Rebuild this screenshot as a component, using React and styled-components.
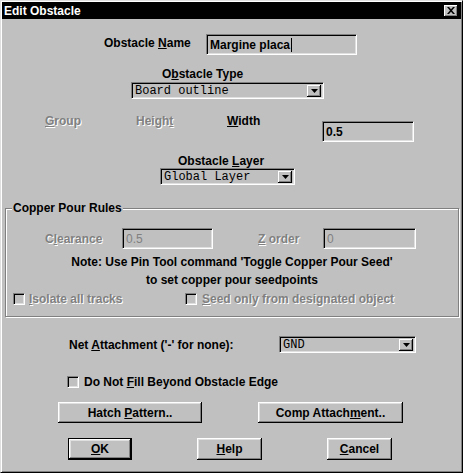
import React from "react";
import styled, { createGlobalStyle, css } from "styled-components";

const GlobalStyle = createGlobalStyle`
  html, body {
    margin: 0;
    padding: 0;
    background: #c0c0c0;
  }
  body {
    font-family: "Liberation Sans", Arial, sans-serif;
    font-size: 12px;
    font-weight: bold;
    color: #000;
  }
  * { box-sizing: border-box; }
`;

const Window = styled.div`
  width: 463px;
  height: 473px;
  background: #c0c0c0;
  border: 1px solid;
  border-color: #dfdfdf #000 #000 #dfdfdf;
  box-shadow: inset 1px 1px #fff, inset -1px -1px #808080;
  padding: 1px;
  display: flex;
  flex-direction: column;
`;

const TitleBar = styled.div`
  height: 17px;
  background: #000;
  color: #fff;
  display: flex;
  align-items: center;
  justify-content: space-between;
  padding: 0 3px 0 2px;
  flex-shrink: 0;
`;

const CloseButton = styled.div`
  width: 14px;
  height: 12px;
  background: #c0c0c0;
  box-shadow: inset -1px -1px #000, inset 1px 1px #fff, inset -2px -2px #808080;
  display: flex;
  align-items: center;
  justify-content: center;
  padding-bottom: 1px;
`;

const Body = styled.div`
  display: flex;
  flex-direction: column;
`;

const Row = styled.div`
  display: flex;
  align-items: center;
  margin-top: ${(p) => p.$mt || 0}px;
  height: ${(p) => p.$h}px;
  padding-left: ${(p) => p.$pl || 0}px;
  gap: ${(p) => p.$gap || 0}px;
  flex-shrink: 0;
`;

const GridRow = styled.div`
  display: grid;
  grid-template-columns: ${(p) => p.$cols};
  align-items: center;
  margin-top: ${(p) => p.$mt || 0}px;
  height: ${(p) => p.$h}px;
  padding-left: ${(p) => p.$pl || 0}px;
  flex-shrink: 0;
`;

const Label = styled.div`
  line-height: 14px;
  white-space: nowrap;
  width: ${(p) => (p.$w ? `${p.$w}px` : "auto")};
  align-self: ${(p) => p.$align || "auto"};
  padding-bottom: ${(p) => p.$raise || 0}px;
  ${(p) =>
    p.$disabled &&
    css`
      color: #808080;
      text-shadow: 1px 1px 0 #fff;
    `}
`;

const U = styled.span`
  text-decoration: underline;
  text-underline-offset: 1px;
`;

const Field = styled.div`
  width: ${(p) => p.$w}px;
  height: ${(p) => p.$h || 21}px;
  align-self: ${(p) => p.$align || "auto"};
  background: #c0c0c0;
  border: 1px solid;
  border-color: #808080 #fff #fff #808080;
  box-shadow: inset 1px 1px #000, inset -1px -1px #dfdfdf;
  display: flex;
  align-items: center;
  padding-left: 3px;
  color: ${(p) => (p.$disabled ? "#808080" : "#000")};
  font-weight: ${(p) => (p.$disabled ? "normal" : "bold")};
  white-space: nowrap;
  overflow: hidden;
`;

const Caret = styled.span`
  display: inline-block;
  width: 1px;
  height: 14px;
  background: #000;
  margin-left: 1px;
`;

const SelectBox = styled.div`
  width: ${(p) => p.$w}px;
  height: ${(p) => p.$h || 17}px;
  background: #c0c0c0;
  border: 1px solid;
  border-color: #808080 #fff #fff #808080;
  box-shadow: inset 1px 1px #000, inset -1px -1px #dfdfdf;
  display: flex;
  align-items: center;
  justify-content: space-between;
  padding: 0 2px 0 3px;
`;

const SelectText = styled.span`
  font-family: "Liberation Mono", "Courier New", monospace;
  font-weight: normal;
  font-size: ${(p) => p.$size || 12}px;
  white-space: nowrap;
`;

const ArrowButton = styled.div`
  width: 14px;
  height: 12px;
  background: #c0c0c0;
  box-shadow: inset -1px -1px #000, inset 1px 1px #fff, inset -2px -2px #808080;
  display: flex;
  align-items: center;
  justify-content: center;
`;

const GroupBox = styled.div`
  position: relative;
  margin: 23px 0 0 3px;
  width: 454px;
  border: 1px solid #808080;
  box-shadow: inset 1px 1px #fff, 1px 1px #fff;
  padding: 19px 0 9px;
  flex-shrink: 0;
`;

const Legend = styled.div`
  position: absolute;
  top: -8px;
  left: 6px;
  padding: 0 1px;
  line-height: 14px;
  background: #c0c0c0;
`;

const Note = styled.div`
  margin-top: 4px;
  line-height: 18px;
  text-align: center;
`;

const CheckItem = styled.div`
  display: flex;
  align-items: center;
  gap: ${(p) => p.$gap || 4}px;
  white-space: nowrap;
`;

const CheckBox = styled.span`
  width: 12px;
  height: 12px;
  background: #c0c0c0;
  border: 1px solid;
  border-color: #808080 #fff #fff #808080;
  box-shadow: inset 1px 1px #000, inset -1px -1px #dfdfdf;
  flex-shrink: 0;
`;

const Button = styled.button`
  width: ${(p) => p.$w}px;
  height: 100%;
  padding: 0;
  margin: 0;
  font: inherit;
  color: #000;
  background: #c0c0c0;
  border: ${(p) => (p.$default ? "1px solid #000" : "none")};
  box-shadow: inset -1px -1px #000, inset 1px 1px #fff, inset -2px -2px #808080,
    inset 2px 2px #dfdfdf;
`;

const Arrow = () => (
  <svg width="7" height="4" viewBox="0 0 7 4">
    <polygon points="0,0 7,0 3.5,4" fill="#000" />
  </svg>
);

function Select({ w, h, text, size }) {
  return (
    <SelectBox $w={w} $h={h}>
      <SelectText $size={size}>{text}</SelectText>
      <ArrowButton>
        <Arrow />
      </ArrowButton>
    </SelectBox>
  );
}

export default function App() {
  return (
    <>
      <GlobalStyle />
      <Window>
        <TitleBar>
          <span>Edit Obstacle</span>
          <CloseButton>
            <svg width="8" height="7" viewBox="0 0 8 7">
              <path
                d="M0 0 L2 0 L4 2.3 L6 0 L8 0 L5 3.5 L8 7 L6 7 L4 4.7 L2 7 L0 7 L3 3.5 Z"
                fill="#000"
              />
            </svg>
          </CloseButton>
        </TitleBar>

        <Body>
          <Row $mt={15} $h={21} $pl={102}>
            <Label $w={102} $raise={4}>
              Obstacle <U>N</U>ame
            </Label>
            <Field $w={151}>
              Margine placa
              <Caret />
            </Field>
          </Row>

          <Row $mt={12} $h={14} $pl={160}>
            <Label>
              O<U>b</U>stacle Type
            </Label>
          </Row>
          <Row $mt={1} $h={17} $pl={129}>
            <Select w={193} text="Board outline" />
          </Row>

          <GridRow $mt={15} $h={28} $pl={43} $cols="91px 91px 95px 92px">
            <Label $disabled $align="start">
              <U>G</U>roup
            </Label>
            <Label $disabled $align="start">
              Heigh<U>t</U>
            </Label>
            <Label $align="start">
              <U>W</U>idth
            </Label>
            <Field $w={92} $align="end">
              0.5
            </Field>
          </GridRow>

          <Row $mt={12} $h={14} $pl={176}>
            <Label>
              Obstacle <U>L</U>ayer
            </Label>
          </Row>
          <Row $h={17} $pl={158}>
            <Select w={135} text="Global Layer" />
          </Row>

          <GroupBox>
            <Legend>Copper Pour Rules</Legend>
            <GridRow $h={21} $pl={39} $cols="77px 136px 65px auto">
              <Label $disabled>
                C<U>l</U>earance
              </Label>
              <Field $w={91} $disabled>
                0.5
              </Field>
              <Label $disabled>
                <U>Z</U> order
              </Label>
              <Field $w={93} $disabled>
                0
              </Field>
            </GridRow>
            <Note>
              Note: Use Pin Tool command 'Toggle Copper Pour Seed'
              <br />
              to set copper pour seedpoints
            </Note>
            <GridRow $mt={2} $h={16} $pl={7} $cols="172px auto">
              <CheckItem>
                <CheckBox />
                <Label $disabled>
                  <U>I</U>solate all tracks
                </Label>
              </CheckItem>
              <CheckItem $gap={5}>
                <CheckBox />
                <Label $disabled>
                  <U>S</U>eed only from designated object
                </Label>
              </CheckItem>
            </GridRow>
          </GroupBox>

          <Row $mt={19} $h={17} $pl={67}>
            <Label $w={210}>
              Net <U>A</U>ttachment ('-' for none):
            </Label>
            <Select w={137} text="GND" size={12} />
          </Row>

          <Row $mt={22} $h={14} $pl={65}>
            <CheckItem $gap={5}>
              <CheckBox />
              <Label>
                Do Not <U>F</U>ill Beyond Obstacle Edge
              </Label>
            </CheckItem>
          </Row>

          <Row $mt={13} $h={21} $pl={56} $gap={56}>
            <Button $w={144}>
              Hatch <U>P</U>attern..
            </Button>
            <Button $w={145}>
              Comp Attach<U>m</U>ent..
            </Button>
          </Row>

          <Row $mt={15} $h={22} $pl={66} $gap={65}>
            <Button $w={64} $default>
              <U>O</U>K
            </Button>
            <Button $w={65}>
              <U>H</U>elp
            </Button>
            <Button $w={65}>
              <U>C</U>ancel
            </Button>
          </Row>
        </Body>
      </Window>
    </>
  );
}
